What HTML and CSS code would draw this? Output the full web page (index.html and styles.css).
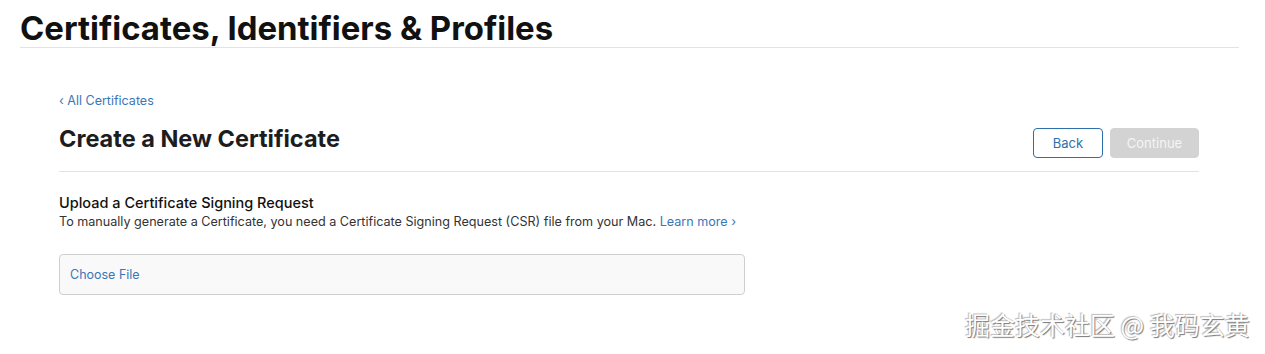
FILE: index.html
```html
<!DOCTYPE html>
<html>
<head>
<meta charset="utf-8">
<link rel="stylesheet" href="styles.css">
</head>
<body>
<header class="page-header">
  <h1 class="page-title">Certificates, Identifiers &amp; Profiles</h1>
</header>
<main class="content">
  <a class="back-link" href="#">‹ All Certificates</a>
  <div class="title-row">
    <h2 class="section-title">Create a New Certificate</h2>
    <div class="actions">
      <button class="btn btn-back">Back</button>
      <button class="btn btn-continue" disabled>Continue</button>
    </div>
  </div>
  <section class="upload">
    <h3 class="upload-title">Upload a Certificate Signing Request</h3>
    <p class="upload-desc">To manually generate a Certificate, you need a Certificate Signing Request (CSR) file from your Mac. <a class="learn" href="#">Learn more ›</a></p>
    <div class="file-box"><span class="file-label">Choose File</span></div>
  </section>
</main>
<div class="watermark">掘金技术社区 @ 我码玄黄</div>
</body>
</html>
```
FILE: styles.css
```css
html, body { margin: 0; padding: 0; background: #fff; }
body {
  font-family: Inter, "Noto Sans", sans-serif;
  color: #1d1d1f;
  width: 1265px;
  height: 354px;
  overflow: hidden;
  position: relative;
}
.page-header {
  margin: 0 26px 0 20px;
  border-bottom: 1px solid #e3e3e3;
  padding-top: 7px;
  height: 40px;
}
.page-title {
  margin: 0;
  font-size: 32.9px;
  font-weight: 700;
  line-height: 42px;
  color: #111;
}
.content {
  margin: 0 66px 0 59px;
  padding-top: 45px;
}
.back-link {
  display: block;
  font-size: 12.5px;
  color: #3a76b8;
  text-decoration: none;
  line-height: 16px;
}
.title-row {
  display: flex;
  justify-content: space-between;
  align-items: flex-start;
  border-bottom: 1px solid #e3e3e3;
  height: 47px;
  margin-top: 15px;
}
.section-title {
  margin: 0;
  font-size: 23.5px;
  font-weight: 700;
  line-height: 30px;
  color: #1d1d1f;
}
.actions {
  display: flex;
  gap: 7px;
  margin-top: 4px;
}
.btn {
  font-family: inherit;
  font-size: 13px;
  height: 30px;
  border-radius: 4px;
  padding: 0;
}
.btn-back {
  width: 70px;
  background: #fff;
  border: 1px solid #2f6fab;
  color: #2f6fab;
}
.btn-continue {
  width: 89px;
  background: #d3d3d3;
  border: 1px solid #d3d3d3;
  color: #f5f5f5;
}
.upload { padding-top: 21px; }
.upload-title {
  margin: 0;
  font-size: 14.5px;
  font-weight: 500;
  line-height: 20px;
  color: #111;
}
.upload-desc {
  margin: 0;
  font-size: 12.6px;
  line-height: 18px;
  color: #333;
}
.learn { color: #3a76b8; text-decoration: none; }
.file-box {
  box-sizing: border-box;
  margin-top: 23px;
  width: 686px;
  height: 41px;
  border: 1px solid #cfcfcf;
  border-radius: 4px;
  background: #f9f9f9;
  display: flex;
  align-items: center;
  padding-left: 10px;
}
.file-label { font-size: 12.5px; color: #3a76b8; }
.watermark {
  position: absolute;
  left: 965px;
  top: 306px;
  font-family: "Noto Sans CJK SC", sans-serif;
  font-size: 25px;
  color: #fff;
  text-shadow: 1px 1px 1px #777, -1px -1px 1px #bbb;
}
```
